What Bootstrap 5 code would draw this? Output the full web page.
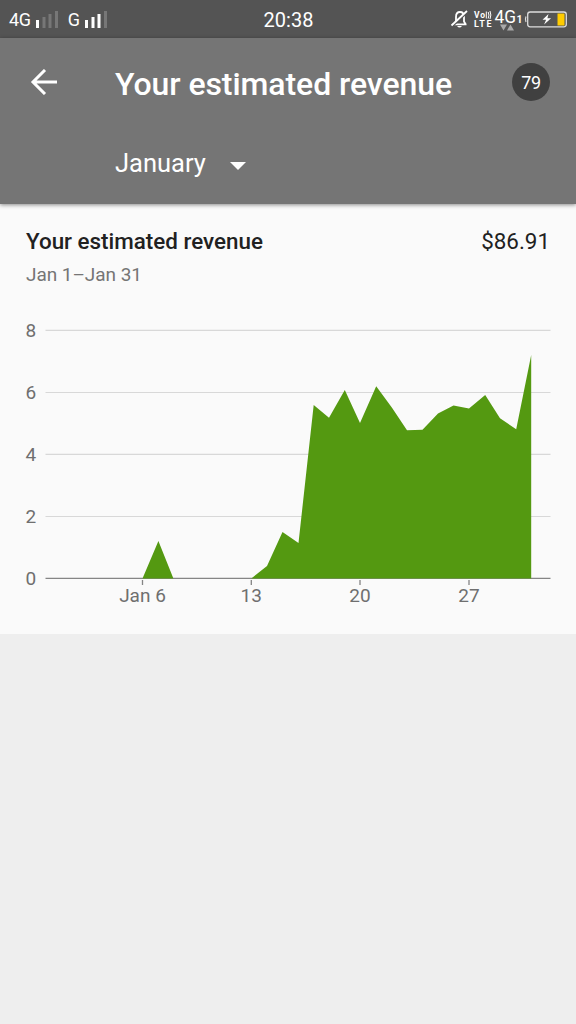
<!DOCTYPE html>
<html lang="en">
<head>
<meta charset="utf-8">
<meta name="viewport" content="width=device-width, initial-scale=1">
<title>Your estimated revenue</title>
<link href="https://cdn.jsdelivr.net/npm/bootstrap@5.3.0/dist/css/bootstrap.min.css" rel="stylesheet">
<style>
body{font-family:Roboto,"Liberation Sans",sans-serif;background:#eee;min-height:100vh;overflow:hidden}
.status-bar{height:38px;background:#545454;color:#fff;font-size:18px;line-height:36px;padding:0 8px 0 9px}
.status-side{flex:1 1 0}
.network{letter-spacing:-.3px;padding-top:2px}
.second-sim{margin-left:9px}
.clock{font-size:20px;padding-top:2px}
.app-bar{height:166px;background:#757575;color:#fff;box-shadow:0 1px 4px rgba(0,0,0,.45);z-index:1}
.title-row{height:91px;padding:0 26px 0 30px}
.title-row h1{font-size:32px;line-height:38px;font-weight:500;margin-left:57px;letter-spacing:-.07px}
.back{margin-top:-4px}
.count{width:38px;height:38px;background:#404040;font-size:18px;line-height:40px;letter-spacing:-.3px;margin-top:-3px}
.month{margin:14px 0 0 115px;font-size:25.500px;line-height:40px;gap:24px}
.month svg{margin-top:6px}
.report{height:430px;background:#fafafa}
.report-head{padding:23px 26px 0;color:#212121;font-size:22.400px;line-height:28px}
.report-head h2{font-size:22.400px;line-height:28px;font-weight:500}
.dates{font-size:19px;line-height:24px;letter-spacing:-.05px;color:#757575;padding:8px 26px 0}
.plot{margin-top:13px}
svg text{font-family:Roboto,"Liberation Sans",sans-serif}
</style>
</head>
<body>
<div class="status-bar d-flex align-items-center">
  <div class="status-side d-flex align-items-center">
    <span class="network">4G</span>
    <svg width="24" height="19" class="ms-1" viewBox="0 0 24 19"><path fill="#fff" d="M1 10h3v8H1z"/><path fill="#777" d="M7.500 7h3v11h-3zM13.500 4h3v14h-3zM20 1h3v17h-3z"/></svg>
    <span class="second-sim network">G</span>
    <svg width="24" height="19" class="ms-1" viewBox="0 0 24 19"><path fill="#fff" d="M1 10h3v8H1zM7.500 7h3v11h-3zM13.500 4h3v14h-3z"/><path fill="#777" d="M20 1h3v17h-3z"/></svg>
  </div>
  <div class="clock">20:38</div>
  <div class="status-side d-flex justify-content-end">
    <svg width="120" height="38" viewBox="448 0 120 38" fill="none">
      <path d="M452.500 24.300h14M454.500 24l1.500-2.500V17c0-3 1.600-5 4-5s4 2 4 5v4.500l1.500 2.500" stroke="#fff" stroke-width="1.800"/>
      <path d="M452.500 26 468 11.500" stroke="#545454" stroke-width="2"/>
      <path d="M451.500 25.500 467 11" stroke="#fff" stroke-width="1.800"/>
      <path d="M457 26h5q-2.500 3-5 0z" fill="#fff"/>
      <g fill="#fff" font-weight="700"><text x="474" y="18" font-size="8.500" textLength="11">Vo</text><text x="474" y="27" font-size="9" textLength="17.500">LTE</text></g>
      <path d="M486.300 11.500v7M488.200 12q1.500 3 0 6.500M490 11q1.700 4 0 8" stroke="#fff" stroke-width="1"/>
      <text x="494.500" y="22.800" font-size="18.500" textLength="21.500" lengthAdjust="spacingAndGlyphs" fill="#fff">4G</text>
      <text x="516.500" y="22.500" font-size="10.500" font-weight="700" fill="#fff">1</text>
      <path fill="#aaa" d="M500 24.500h7l-3.500 6zM507 30.500h7l-3.500-6z"/>
      <path d="M526 16.500q-1.300 3 0 5.500" stroke="#ddd" stroke-width="1.200"/>
      <rect x="527.700" y="12" width="38.600" height="14.800" rx="2.500" stroke="#ddd" stroke-width="1.300"/>
      <path d="M557.500 13.500h7v12h-7z" fill="#fc0"/>
      <path d="m548.500 14-6 5.800h3.600l-2 4.700 7-6.200h-3.700z" fill="#fff"/>
    </svg>
  </div>
</div>
<header class="app-bar position-relative">
  <div class="title-row d-flex align-items-center">
    <svg class="back" width="28" height="26" viewBox="0 0 28 26" fill="none" stroke="#fff" stroke-width="3"><path d="M27 13H3M15 1 3 13l12 12"/></svg>
    <h1 class="mb-0">Your estimated revenue</h1>
    <div class="count rounded-circle text-center ms-auto">79</div>
  </div>
  <div class="month d-flex align-items-center">
    <span>January</span>
    <svg width="16" height="8" viewBox="0 0 16 8"><path fill="#fff" d="M0 0h16L8 8z"/></svg>
  </div>
</header>
<main class="report">
  <div class="report-head d-flex justify-content-between">
    <h2 class="mb-0">Your estimated revenue</h2><span>$86.91</span>
  </div>
  <div class="dates">Jan 1–Jan 31</div>
  <svg class="plot d-block" width="576" height="320" viewBox="0 300 576 320">
    <path d="M45.500 330.300h505M45.500 392.500h505M45.500 454.400h505M45.500 516.500h505" stroke="#d8d8d8" stroke-width="1.200"/>
    <path d="M45.500 578.400h505" stroke="#858585" stroke-width="1.300"/>
    <path d="M142.500 580v5M251.300 580v5M360 580v5M469 580v5" stroke="#858585" stroke-width="1.300"/>
    <path fill="#549911" d="M142.500 578.500 158.400 541l15 37.500zM251.300 578.500 267 566l15.500-34 16 11L313.700 405l15.300 12.700L344.800 390 360 423l16.200-36.700L392 407.700l15 22.600 15.500-.5 15.500-16.200 15.500-8 15.500 3 16.200-13.500L500 418.300l16.200 11L531.200 355v223.500z"/>
    <g fill="#6f6f6f" font-size="19">
      <text x="25.500" y="336.800">8</text><text x="25.500" y="399">6</text><text x="25.500" y="461">4</text><text x="25.500" y="523">2</text><text x="25.500" y="584.800">0</text>
      <g text-anchor="middle"><text x="142.500" y="602.300">Jan 6</text><text x="251.300" y="602.300">13</text><text x="360" y="602.300">20</text><text x="469" y="602.300">27</text></g>
    </g>
  </svg>
</main>
<script src="https://cdn.jsdelivr.net/npm/bootstrap@5.3.0/dist/js/bootstrap.bundle.min.js"></script>
</body>
</html>
